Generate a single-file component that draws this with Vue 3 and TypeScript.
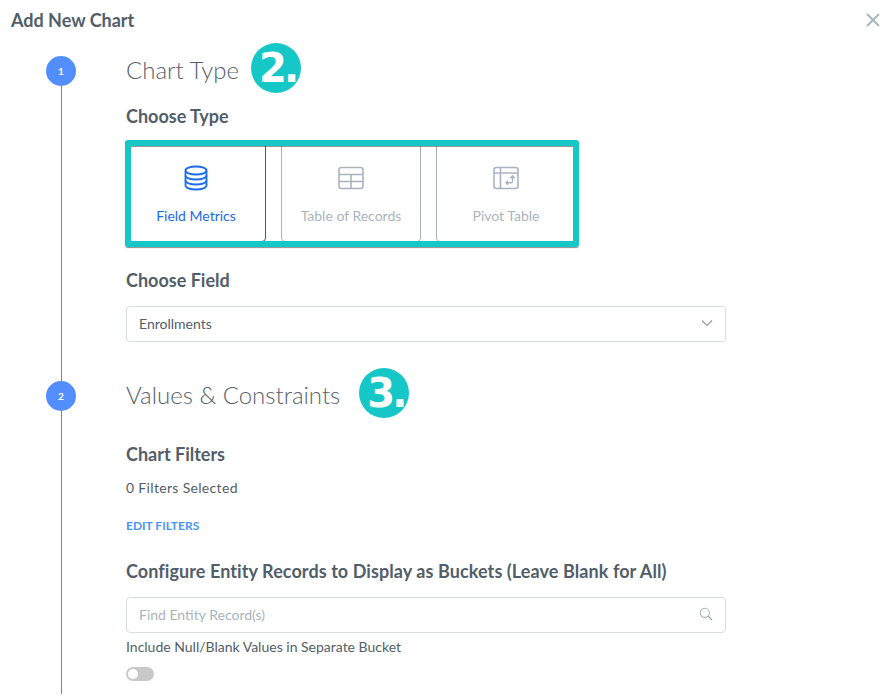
<template>
  <div class="modal">
    <header class="modal__header">
      <h1 class="modal__title">Add New Chart</h1>
      <svg class="modal__close" width="14" height="14" viewBox="0 0 14 14" aria-label="Close">
        <path d="M1 1l12 12M13 1L1 13" fill="none" stroke="#a9b5c0" stroke-width="2" />
      </svg>
    </header>

    <section class="step step--first">
      <div class="step__rail">
        <span class="step__dot">1</span>
        <span class="step__line"></span>
      </div>
      <div class="step__body">
        <div class="step__heading">
          <h2>Chart Type</h2>
          <span class="callout callout--two">2.</span>
        </div>

        <h3 class="label label--type">Choose Type</h3>
        <div class="types">
          <div
            v-for="t in chartTypes"
            :key="t.name"
            class="type"
            :class="{ 'type--active': t.active }"
          >
            <svg v-if="t.icon === 'db'" width="26" height="26" viewBox="0 0 26 26" fill="none" stroke="currentColor" stroke-width="1.8">
              <ellipse cx="13" cy="5.5" rx="10.5" ry="4" />
              <path d="M2.5 5.5v15c0 2.2 4.7 4 10.5 4s10.500-1.800 10.500-4v-15" />
              <path d="M2.500 10.500c0 2.200 4.700 4 10.500 4s10.500-1.800 10.500-4M2.500 15.500c0 2.200 4.700 4 10.500 4s10.500-1.800 10.500-4" />
            </svg>
            <svg v-else-if="t.icon === 'table'" width="26" height="26" viewBox="0 0 26 26" fill="none" stroke="currentColor" stroke-width="1.600">
              <rect x="1" y="2.500" width="24" height="21" rx="2.500" />
              <path d="M1 9.500h24M1 16.500h24M13 9.500V23.500" />
            </svg>
            <svg v-else width="26" height="26" viewBox="0 0 26 26" fill="none" stroke="currentColor" stroke-width="1.600">
              <rect x="1" y="2.500" width="24" height="21" rx="2.500" />
              <path d="M1 8h24M7.500 2.500v21" />
              <path d="M19.500 11v5.500c0 .8-.5 1.300-1.300 1.300H13M17.300 13.200l2.200-2.400 2.200 2.400M15.200 15.800l-2.200 2 2.200 2" stroke-width="1.400" />
            </svg>
            <span class="type__name">{{ t.name }}</span>
          </div>
          <div class="types__highlight"></div>
        </div>

        <h3 class="label label--field">Choose Field</h3>
        <div class="field field--select">
          <span>Enrollments</span>
          <svg width="12" height="8" viewBox="0 0 12 8">
            <path d="M1 1.500l5 5 5-5" fill="none" stroke="#8d99a5" stroke-width="1.100" />
          </svg>
        </div>
      </div>
    </section>

    <section class="step">
      <div class="step__rail">
        <span class="step__dot">2</span>
        <span class="step__line"></span>
      </div>
      <div class="step__body">
        <div class="step__heading">
          <h2>Values &amp; Constraints</h2>
          <span class="callout callout--three">3.</span>
        </div>

        <h3 class="label label--filters">Chart Filters</h3>
        <p class="text text--count">0 Filters Selected</p>
        <a class="link">EDIT FILTERS</a>

        <h3 class="label label--buckets">Configure Entity Records to Display as Buckets (Leave Blank for All)</h3>
        <div class="field field--search">
          <span class="field__placeholder">Find Entity Record(s)</span>
          <svg width="14" height="14" viewBox="0 0 14 14" fill="none" stroke="#aab4be" stroke-width="1.100">
            <circle cx="5.800" cy="5.800" r="4.600" />
            <path d="M9.200 9.200l3.800 3.800" stroke="#8d99a5" />
          </svg>
        </div>
        <p class="text text--include">Include Null/Blank Values in Separate Bucket</p>
        <span class="toggle"><span class="toggle__knob"></span></span>
      </div>
    </section>
  </div>
</template>

<script setup lang="ts">
interface ChartType {
  name: string;
  icon: 'db' | 'table' | 'pivot';
  active?: boolean;
}

const chartTypes: ChartType[] = [
  { name: 'Field Metrics', icon: 'db', active: true },
  { name: 'Table of Records', icon: 'table' },
  { name: 'Pivot Table', icon: 'pivot' },
];
</script>

<style>
html,
body {
  margin: 0;
  background: #fff;
  overflow: hidden;
}
</style>

<style scoped>
.modal {
  width: 885px;
  height: 700px;
  box-sizing: border-box;
  overflow: hidden;
  background: #fff;
  color: #525e6a;
  font-family: Lato, 'Open Sans', sans-serif;
}

.modal__header {
  display: flex;
  align-items: center;
  justify-content: space-between;
  height: 40px;
  padding: 0 5px 0 11px;
  margin-bottom: 16px;
}

.modal__title {
  margin: 0;
  font-size: 18px;
  font-weight: 700;
  line-height: 40px;
}

.step {
  display: flex;
  gap: 50px;
  padding-left: 46px;
  height: 313px;
}

.step--first {
  height: 325px;
}

.step__rail {
  display: flex;
  flex-direction: column;
  align-items: center;
  width: 30px;
  flex: none;
}

.step__dot {
  display: flex;
  align-items: center;
  justify-content: center;
  width: 30px;
  height: 30px;
  flex: none;
  border-radius: 50%;
  background: #528eff;
  color: #fff;
  font-size: 10px;
  font-weight: 700;
}

.step__line {
  flex: 1;
  width: 1px;
  background: #5a87e0;
}

.step__body {
  width: 600px;
  flex: none;
}

.step__heading {
  display: flex;
  align-items: center;
  height: 30px;
}

.step__heading h2 {
  margin: -2px 0 0;
  font-size: 24px;
  font-weight: 300;
  line-height: 30px;
  color: #55616d;
}

.callout {
  display: flex;
  align-items: center;
  justify-content: center;
  box-sizing: border-box;
  width: 50px;
  height: 50px;
  padding-left: 3px;
  flex: none;
  border-radius: 50%;
  background: #16c7c7;
  color: #fff;
  font-family: 'DejaVu Sans', sans-serif;
  font-size: 40px;
  font-weight: 700;
  letter-spacing: -3px;
}

.callout--two {
  margin: -6px 0 0 12px;
}

.callout--three {
  margin: -6px 0 0 19px;
}

.label {
  margin: 0;
  font-size: 18px;
  font-weight: 700;
  line-height: 22px;
}

.label--type {
  margin-top: 19px;
}

.label--field {
  margin-top: 27px;
}

.label--filters {
  margin-top: 32px;
}

.label--buckets {
  margin-top: 27px;
  letter-spacing: 0.08px;
}

.types {
  position: relative;
  display: flex;
  gap: 15px;
  margin-top: 14px;
}

.type {
  display: flex;
  flex-direction: column;
  align-items: center;
  box-sizing: border-box;
  width: 140px;
  height: 101px;
  padding-top: 23px;
  border: 1px solid #a8b3bd;
  border-radius: 4px;
  color: #a9b4be;
}

.type--active {
  border-color: #1f5fd6;
  color: #1a6bec;
}

.type__name {
  margin-top: 16px;
  font-size: 14px;
  line-height: 18px;
}

.types__highlight {
  position: absolute;
  left: -1px;
  top: -1px;
  width: 454px;
  height: 107px;
  box-sizing: border-box;
  border: 6px solid #16c7c7;
  border-radius: 3px;
  box-shadow: 0 1px 1px rgba(0, 0, 0, 0.45), inset 0 1px 0 rgba(0, 0, 0, 0.4);
}

.field {
  display: flex;
  align-items: center;
  justify-content: space-between;
  box-sizing: border-box;
  width: 600px;
  height: 36px;
  padding: 0 12px 2px;
  border: 1px solid #d8dde2;
  border-radius: 4px;
  font-size: 14px;
}

.field--select {
  margin-top: 15px;
}

.field--search {
  margin-top: 15px;
}

.field__placeholder {
  color: #a9b4be;
}

.text {
  margin: 0;
  font-size: 14px;
  line-height: 18px;
}

.text--count {
  margin-top: 14px;
  letter-spacing: 0.33px;
}

.text--include {
  margin-top: 5px;
}

.link {
  display: block;
  margin-top: 21px;
  color: #4b93f7;
  font-size: 12px;
  font-weight: 700;
  line-height: 15px;
}

.toggle {
  display: block;
  position: relative;
  width: 28px;
  height: 14px;
  margin-top: 11px;
  border-radius: 7px;
  background: #c9c9c9;
}

.toggle__knob {
  position: absolute;
  left: 2px;
  top: 2px;
  width: 10px;
  height: 10px;
  border-radius: 50%;
  background: #fff;
}
</style>
